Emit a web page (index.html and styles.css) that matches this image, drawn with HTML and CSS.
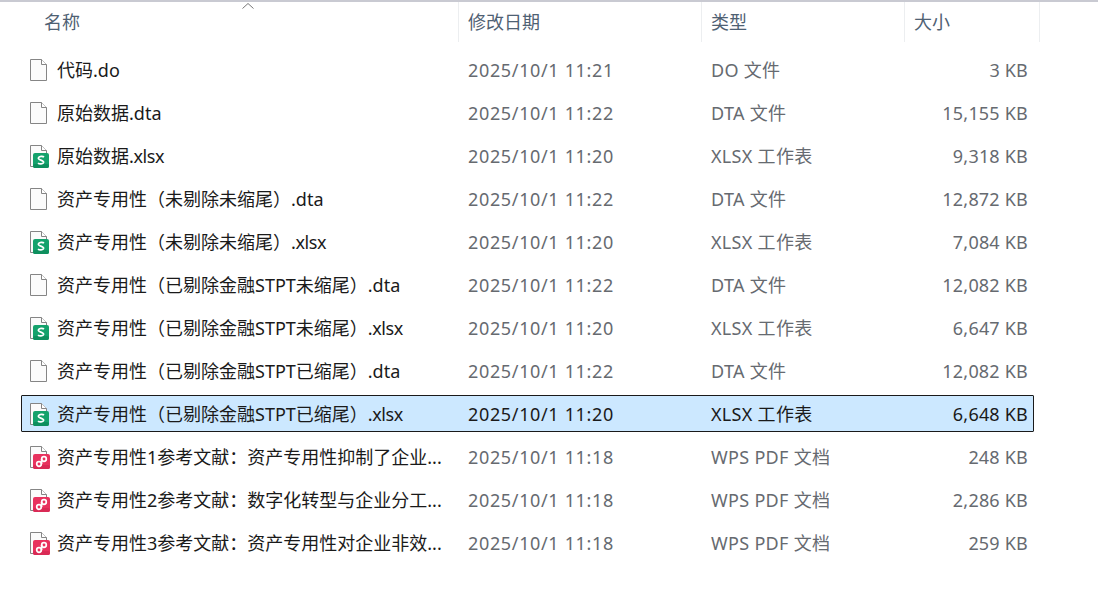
FILE: index.html
```html
<!DOCTYPE html>
<html>
<head>
    <title>文件列表</title>
    <meta charset="utf-8" />
    <link rel="stylesheet" href="styles.css">
</head>
<body>
    <svg class="defs" width="0" height="0">
        <symbol id="page" viewBox="0 0 20 24">
            <path d="M1.5 1.5H12.5L17.5 6.5V22.5H1.5Z" fill="#fbfbfb" stroke="#858585" stroke-width="1"/>
            <path d="M12.5 1.5V6.5H17.5" fill="#fff" stroke="#858585" stroke-width="1"/>
        </symbol>
        <symbol id="sheet" viewBox="0 0 20 24">
            <path d="M1.5 1.5H12.5L17.5 6.5V22.5H1.5Z" fill="#fbfbfb" stroke="#858585" stroke-width="1"/>
            <path d="M12.5 1.5V6.5H17.5" fill="#fff" stroke="#858585" stroke-width="1"/>
            <rect x="4" y="9" width="16" height="15" rx="2" fill="#14a26c"/>
            <rect x="4" y="20" width="16" height="4" rx="2" fill="#0e8f5e"/>
            <path d="M15 13C14 12.2 10 12 9.4 14C8.9 16.4 14.8 15.8 14.6 18.4C14.2 20.4 10.2 20.2 9 19.2" fill="none" stroke="#fff" stroke-width="1.7"/>
        </symbol>
        <symbol id="pdf" viewBox="0 0 21 24">
            <path d="M1.5 1.5H12.5L17.5 6.5V22.5H1.5Z" fill="#fbfbfb" stroke="#858585" stroke-width="1"/>
            <path d="M12.5 1.5V6.5H17.5" fill="#fff" stroke="#858585" stroke-width="1"/>
            <rect x="4" y="9" width="17" height="15" rx="2" fill="#e8325e"/>
            <rect x="4" y="20" width="17" height="4" rx="2" fill="#d92a55"/>
            <circle cx="15" cy="14" r="2.3" fill="none" stroke="#fff" stroke-width="1.7"/>
            <circle cx="10" cy="19" r="2.3" fill="none" stroke="#fff" stroke-width="1.7"/>
            <path d="M12.6 14V19" stroke="#fff" stroke-width="1.7"/>
        </symbol>
    </svg>

    <div class="header">
        <div class="hcell hname">名称</div>
        <div class="hcell hdate">修改日期</div>
        <div class="hcell htype">类型</div>
        <div class="hcell hsize">大小</div>
        <svg class="sort" width="14" height="8" viewBox="0 0 14 8"><path d="M1.5 6.5L7 1.5L12.5 6.5" fill="none" stroke="#777"/></svg>
    </div>

    <div class="list">
        <div class="row">
            <div class="name"><svg class="icon"><use href="#page"/></svg><span>代码.do</span></div>
            <div class="date">2025/10/1 11:21</div>
            <div class="type">DO 文件</div>
            <div class="size">3 KB</div>
        </div>
        <div class="row">
            <div class="name"><svg class="icon"><use href="#page"/></svg><span>原始数据.dta</span></div>
            <div class="date">2025/10/1 11:22</div>
            <div class="type">DTA 文件</div>
            <div class="size">15,155 KB</div>
        </div>
        <div class="row">
            <div class="name"><svg class="icon"><use href="#sheet"/></svg><span>原始数据<span class="ext">.xlsx</span></span></div>
            <div class="date">2025/10/1 11:20</div>
            <div class="type">XLSX 工作表</div>
            <div class="size">9,318 KB</div>
        </div>
        <div class="row">
            <div class="name"><svg class="icon"><use href="#page"/></svg><span>资产专用性（未剔除未缩尾）.dta</span></div>
            <div class="date">2025/10/1 11:22</div>
            <div class="type">DTA 文件</div>
            <div class="size">12,872 KB</div>
        </div>
        <div class="row">
            <div class="name"><svg class="icon"><use href="#sheet"/></svg><span>资产专用性（未剔除未缩尾）<span class="ext">.xlsx</span></span></div>
            <div class="date">2025/10/1 11:20</div>
            <div class="type">XLSX 工作表</div>
            <div class="size">7,084 KB</div>
        </div>
        <div class="row">
            <div class="name"><svg class="icon"><use href="#page"/></svg><span>资产专用性（已剔除金融STPT未缩尾）.dta</span></div>
            <div class="date">2025/10/1 11:22</div>
            <div class="type">DTA 文件</div>
            <div class="size">12,082 KB</div>
        </div>
        <div class="row">
            <div class="name"><svg class="icon"><use href="#sheet"/></svg><span>资产专用性（已剔除金融STPT未缩尾）<span class="ext">.xlsx</span></span></div>
            <div class="date">2025/10/1 11:20</div>
            <div class="type">XLSX 工作表</div>
            <div class="size">6,647 KB</div>
        </div>
        <div class="row">
            <div class="name"><svg class="icon"><use href="#page"/></svg><span>资产专用性（已剔除金融STPT已缩尾）.dta</span></div>
            <div class="date">2025/10/1 11:22</div>
            <div class="type">DTA 文件</div>
            <div class="size">12,082 KB</div>
        </div>
        <div class="row selected">
            <div class="name"><svg class="icon"><use href="#sheet"/></svg><span>资产专用性（已剔除金融STPT已缩尾）<span class="ext">.xlsx</span></span></div>
            <div class="date">2025/10/1 11:20</div>
            <div class="type">XLSX 工作表</div>
            <div class="size">6,648 KB</div>
        </div>
        <div class="row">
            <div class="name"><svg class="icon icon-wide"><use href="#pdf"/></svg><span>资产专用性1参考文献：资产专用性抑制了企业...</span></div>
            <div class="date">2025/10/1 11:18</div>
            <div class="type">WPS PDF 文档</div>
            <div class="size">248 KB</div>
        </div>
        <div class="row">
            <div class="name"><svg class="icon icon-wide"><use href="#pdf"/></svg><span>资产专用性2参考文献：数字化转型与企业分工...</span></div>
            <div class="date">2025/10/1 11:18</div>
            <div class="type">WPS PDF 文档</div>
            <div class="size">2,286 KB</div>
        </div>
        <div class="row">
            <div class="name"><svg class="icon icon-wide"><use href="#pdf"/></svg><span>资产专用性3参考文献：资产专用性对企业非效...</span></div>
            <div class="date">2025/10/1 11:18</div>
            <div class="type">WPS PDF 文档</div>
            <div class="size">259 KB</div>
        </div>
    </div>
</body>
</html>
```

FILE: styles.css
```css
html, body {
    margin: 0;
    padding: 0;
    height: 100%;
    overflow: hidden;
}

body {
    background-color: #fff;
    font-family: "Noto Sans", "Noto Sans CJK SC", sans-serif;
    font-size: 18px;
    color: #1a1a1a;
}

.defs {
    position: absolute;
}

.header {
    position: relative;
    display: grid;
    grid-template-columns: 459px 243px 203px 135px;
    height: 40px;
    border-top: 2px solid #c9cad2;
    color: #4f6173;
}

.hcell {
    display: flex;
    align-items: center;
    border-right: 1px solid #eceef0;
    box-sizing: border-box;
    padding-bottom: 2px;
}

.hname {
    padding-left: 44px;
}

.hdate,
.htype,
.hsize {
    padding-left: 9px;
}

.sort {
    position: absolute;
    left: 241px;
    top: 0;
}

.list {
    display: flex;
    flex-direction: column;
    gap: 6px;
    width: 1013px;
    margin: 9px 0 0 21px;
}

.row {
    display: grid;
    grid-template-columns: 437px 243px 203px 130px;
    align-items: center;
    height: 37px;
    box-sizing: border-box;
}

.row.selected {
    grid-template-columns: 436px 243px 203px 129px;
    background-color: #cce8ff;
    border: 1px solid #1a1a1a;
    border-radius: 1px;
}

.name {
    display: flex;
    align-items: center;
    gap: 8px;
    padding-left: 8px;
    white-space: nowrap;
}

.name > span {
    padding-bottom: 2px;
}

.ext {
    letter-spacing: -0.4px;
}

.selected .name {
    padding-left: 7px;
}

.icon {
    width: 20px;
    height: 24px;
    flex: none;
}

.icon-wide {
    width: 21px;
    margin-right: -1px;
}

.date,
.type {
    padding-left: 10px;
    color: #666a70;
}

.date {
    letter-spacing: 0.65px;
}

.type {
    padding-bottom: 2px;
    letter-spacing: 0.3px;
}

.size {
    padding-right: 6px;
    text-align: right;
    letter-spacing: 0.2px;
    color: #666a70;
}

.selected .size {
    padding-right: 5px;
}

.selected .date,
.selected .type,
.selected .size {
    color: #1a1a1a;
}
```
